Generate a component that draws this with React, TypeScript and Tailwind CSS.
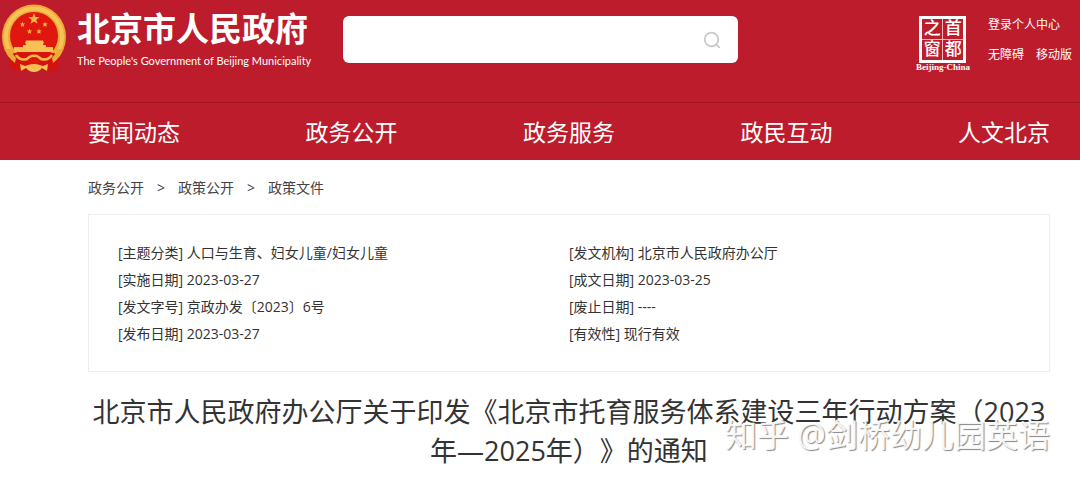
import React from "react";

const navItems = ["要闻动态", "政务公开", "政务服务", "政民互动", "人文北京"];
const crumbs = ["政务公开", "政策公开", "政策文件"];
const details = [
  ["主题分类", "人口与生育、妇女儿童/妇女儿童"],
  ["发文机构", "北京市人民政府办公厅"],
  ["实施日期", "2023-03-27"],
  ["成文日期", "2023-03-25"],
  ["发文字号", "京政办发〔2023〕6号"],
  ["废止日期", "----"],
  ["发布日期", "2023-03-27"],
  ["有效性", "现行有效"],
];

function Star({ x, y, r }: { x: number; y: number; r: number }) {
  const points = Array.from({ length: 10 }, (_, i) => {
    const a = (Math.PI / 5) * i - Math.PI / 2;
    const d = i % 2 ? r * 0.4 : r;
    return `${x + d * Math.cos(a)},${y + d * Math.sin(a)}`;
  }).join(" ");
  return <polygon points={points} fill="#f6b545" />;
}

function Emblem() {
  return (
    <svg viewBox="0 0 68 74" className="h-[74px] w-[68px] shrink-0" aria-hidden="true">
      <ellipse cx="34" cy="36" rx="32" ry="32.5" fill="#efa936" />
      <ellipse cx="34" cy="36" rx="28" ry="28.5" fill="none" stroke="#f5c458" strokeWidth="4" />
      <ellipse cx="34" cy="35" rx="24" ry="24" fill="#e0170f" />
      <path d="M14 52h40l5 3-1 13q-6 3-10 2l-14-2-14 2q-5 1-10-3l-1-12z" fill="#d3130f" />
      <path d="M5 48q3 9 10 14l1-5q-4-4-5-9zM63 48q-3 9-10 14l-1-5q4-4 5-9z" fill="#efa936" />
      <Star x={34} y={18} r={6} />
      <Star x={22.5} y={23.5} r={3} />
      <Star x={45} y={23.5} r={3} />
      <Star x={29.5} y={30.5} r={3} />
      <Star x={39} y={30.5} r={3} />
      <path d="M26 39.5h17l1 2.5-1 1v2H26v-2l-1-1zM23 44h23v2h7v5H14v-5h9z" fill="#f6c055" />
      <path d="M16 54q4 6 11 4 4-4 7-3 3-1 7 3 7 2 11-4" fill="none" stroke="#f4b644" strokeWidth="2.6" />
      <path d="M29 58h10l1 3-3 3h-6l-3-3z" fill="#e0170f" />
      <path d="M20 63l5 2q5-2 9-2t9 2l5-2-1 7-5-3q-3 4-8 4t-8-4l-5 3z" fill="#f6c055" />
    </svg>
  );
}

function Seal() {
  return (
    <a href="#" className="flex w-[54px] flex-col items-center font-['Liberation_Serif','Noto_Sans_CJK_SC',serif] text-white">
      <span className="grid h-[47px] w-[47px] grid-cols-2 border-3 border-white text-center text-[17px] font-medium leading-[20px]">
        <span className="border-r border-b border-white/70">之</span>
        <span className="border-b border-white/70">首</span>
        <span className="border-r border-white/70">窗</span>
        <span>都</span>
      </span>
      <span className="whitespace-nowrap text-[9px] font-bold leading-[9px]">Beijing-China</span>
    </a>
  );
}

export default function App() {
  return (
    <div className="bg-white font-['Open_Sans','Noto_Sans_CJK_SC',sans-serif] text-[#333] [text-spacing-trim:space-all]" lang="zh-CN">
      <header className="bg-[#bc1c2c] text-white">
        <div className="flex h-[102px] items-start">
          <a href="#" className="flex w-[343px] items-start gap-[9px] pt-px">
            <Emblem />
            <span className="flex flex-col gap-1 whitespace-nowrap pt-2">
              <span className="text-[33px] font-bold leading-[40px]">北京市人民政府</span>
              <span className="font-['Lato',sans-serif] text-[11px] leading-4">The People's Government of Beijing Municipality</span>
            </span>
          </a>
          <form className="mt-4 flex h-[47px] w-[395px] items-center rounded-md bg-white pr-4" onSubmit={(e) => e.preventDefault()}>
            <input type="search" aria-label="搜索" className="h-full min-w-0 flex-1 bg-transparent px-3 text-[14px] text-[#333] outline-none" />
            <button type="submit" aria-label="搜索">
              <svg viewBox="0 0 20 20" className="h-5 w-5" fill="none" stroke="#c9c9c9" strokeWidth="1.8">
                <circle cx="9.5" cy="9.5" r="6.8" />
                <path d="M14.3 14.3l3 3" strokeLinecap="round" />
              </svg>
            </button>
          </form>
          <div className="ml-auto flex gap-[18px] pt-4 pr-2">
            <Seal />
            <nav className="flex flex-col gap-3 whitespace-nowrap text-[12px] leading-[18px]">
              <a href="#">登录个人中心</a>
              <span className="flex gap-3">
                <a href="#">无障碍</a>
                <a href="#">移动版</a>
              </span>
            </nav>
          </div>
        </div>
        <nav className="flex h-[58px] items-center justify-between border-t border-[#a01421] pt-0.5 pr-[30px] pl-[88px] text-[23px]">
          {navItems.map((item) => (
            <a key={item} href="#">{item}</a>
          ))}
        </nav>
      </header>

      <main className="pr-[30px] pl-[88px]">
        <nav className="flex h-[54px] items-center gap-[13px] text-[14px] text-[#444]">
          {crumbs.map((crumb, i) => (
            <React.Fragment key={crumb}>
              {i > 0 && <span>&gt;</span>}
              <a href="#">{crumb}</a>
            </React.Fragment>
          ))}
        </nav>
        <ul className="grid grid-cols-2 border border-[#eee] px-[29px] pt-6 pb-6 text-[14px] leading-[27px]">
          {details.map(([label, value]) => (
            <li key={label}>[{label}] {value}</li>
          ))}
        </ul>
        <div className="relative mt-5 pb-[10px]">
          <h1 className="text-center text-[27px] leading-[39px]">
            北京市人民政府办公厅关于印发《北京市托育服务体系建设三年行动方案（2023年—2025年）》的通知
          </h1>
          <span className="pointer-events-none absolute top-[21px] right-0 whitespace-nowrap text-[32px] leading-[44px] text-white/90 [text-shadow:1px_1px_1px_#888]">
            知乎 @剑桥幼儿园英语
          </span>
        </div>
      </main>
    </div>
  );
}
